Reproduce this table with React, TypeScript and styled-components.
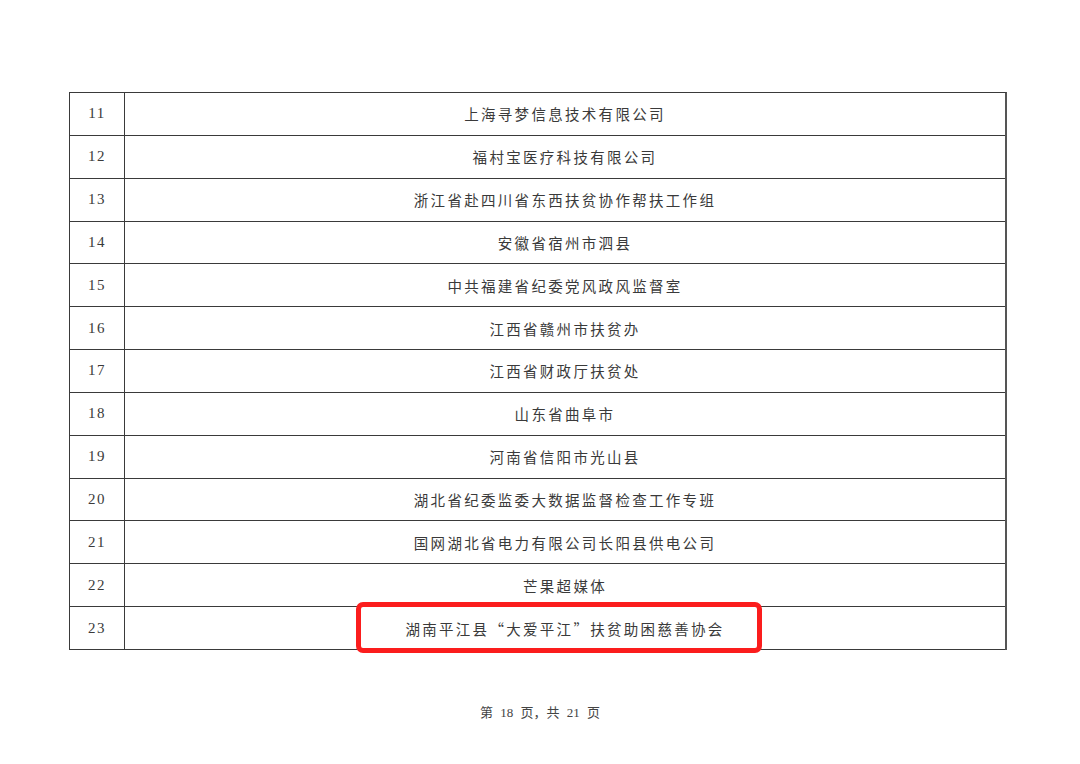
import React from "react";
import styled, { createGlobalStyle } from "styled-components";

const Global = createGlobalStyle`
  html, body { margin: 0; padding: 0; background: #ffffff; }
  body { width: 1080px; height: 764px; overflow: hidden; }
`;

const Page = styled.div`
  width: 1080px;
  height: 764px;
  box-sizing: border-box;
  padding: 92px 73px 0 69px;
  display: flex;
  flex-direction: column;
  align-items: stretch;
`;

const Table = styled.div`
  position: relative;
  width: 938px;
  border-top: 1.5px solid #3a3a3a;
  border-left: 1.5px solid #3a3a3a;
  border-right: 2px solid #555;
  box-sizing: border-box;
`;

const Row = styled.div`
  display: grid;
  grid-template-columns: 55px 1fr;
  height: 42.85px;
  border-bottom: 1.5px solid #3a3a3a;
  box-sizing: border-box;
`;

const NumCell = styled.div`
  display: flex;
  align-items: center;
  justify-content: center;
  border-right: 1.5px solid #3a3a3a;
  font-family: "Liberation Serif", "Noto Sans CJK SC", serif;
  font-size: 15px;
  letter-spacing: 1.5px;
  color: #3a3a3a;
`;

const NameCell = styled.div`
  display: flex;
  align-items: center;
  justify-content: center;
  font-family: "Noto Sans CJK SC", sans-serif;
  font-size: 14.5px;
  letter-spacing: 2.3px;
  color: #3a3a3a;
`;

const Highlight = styled.div`
  position: absolute;
  left: 286px;
  top: 509px;
  width: 406px;
  height: 51px;
  border: 5px solid #fb1d1d;
  border-radius: 7px;
  box-sizing: border-box;
`;

const Footer = styled.div`
  margin-top: 52px;
  text-align: center;
  width: 938px;
  font-family: "Liberation Serif", "Noto Sans CJK SC", serif;
  font-size: 13px;
  color: #444;
  word-spacing: 4px;
  padding-left: 2px;
`;

const rows: [string, string][] = [
  ["11", "上海寻梦信息技术有限公司"],
  ["12", "福村宝医疗科技有限公司"],
  ["13", "浙江省赴四川省东西扶贫协作帮扶工作组"],
  ["14", "安徽省宿州市泗县"],
  ["15", "中共福建省纪委党风政风监督室"],
  ["16", "江西省赣州市扶贫办"],
  ["17", "江西省财政厅扶贫处"],
  ["18", "山东省曲阜市"],
  ["19", "河南省信阳市光山县"],
  ["20", "湖北省纪委监委大数据监督检查工作专班"],
  ["21", "国网湖北省电力有限公司长阳县供电公司"],
  ["22", "芒果超媒体"],
  ["23", "湖南平江县“大爱平江”扶贫助困慈善协会"],
];

export default function App() {
  return (
    <>
      <Global />
      <Page>
        <Table>
          {rows.map(([n, name]) => (
            <Row key={n}>
              <NumCell>{n}</NumCell>
              <NameCell>{name}</NameCell>
            </Row>
          ))}
          <Highlight />
        </Table>
        <Footer>第 18 页，共 21 页</Footer>
      </Page>
    </>
  );
}
